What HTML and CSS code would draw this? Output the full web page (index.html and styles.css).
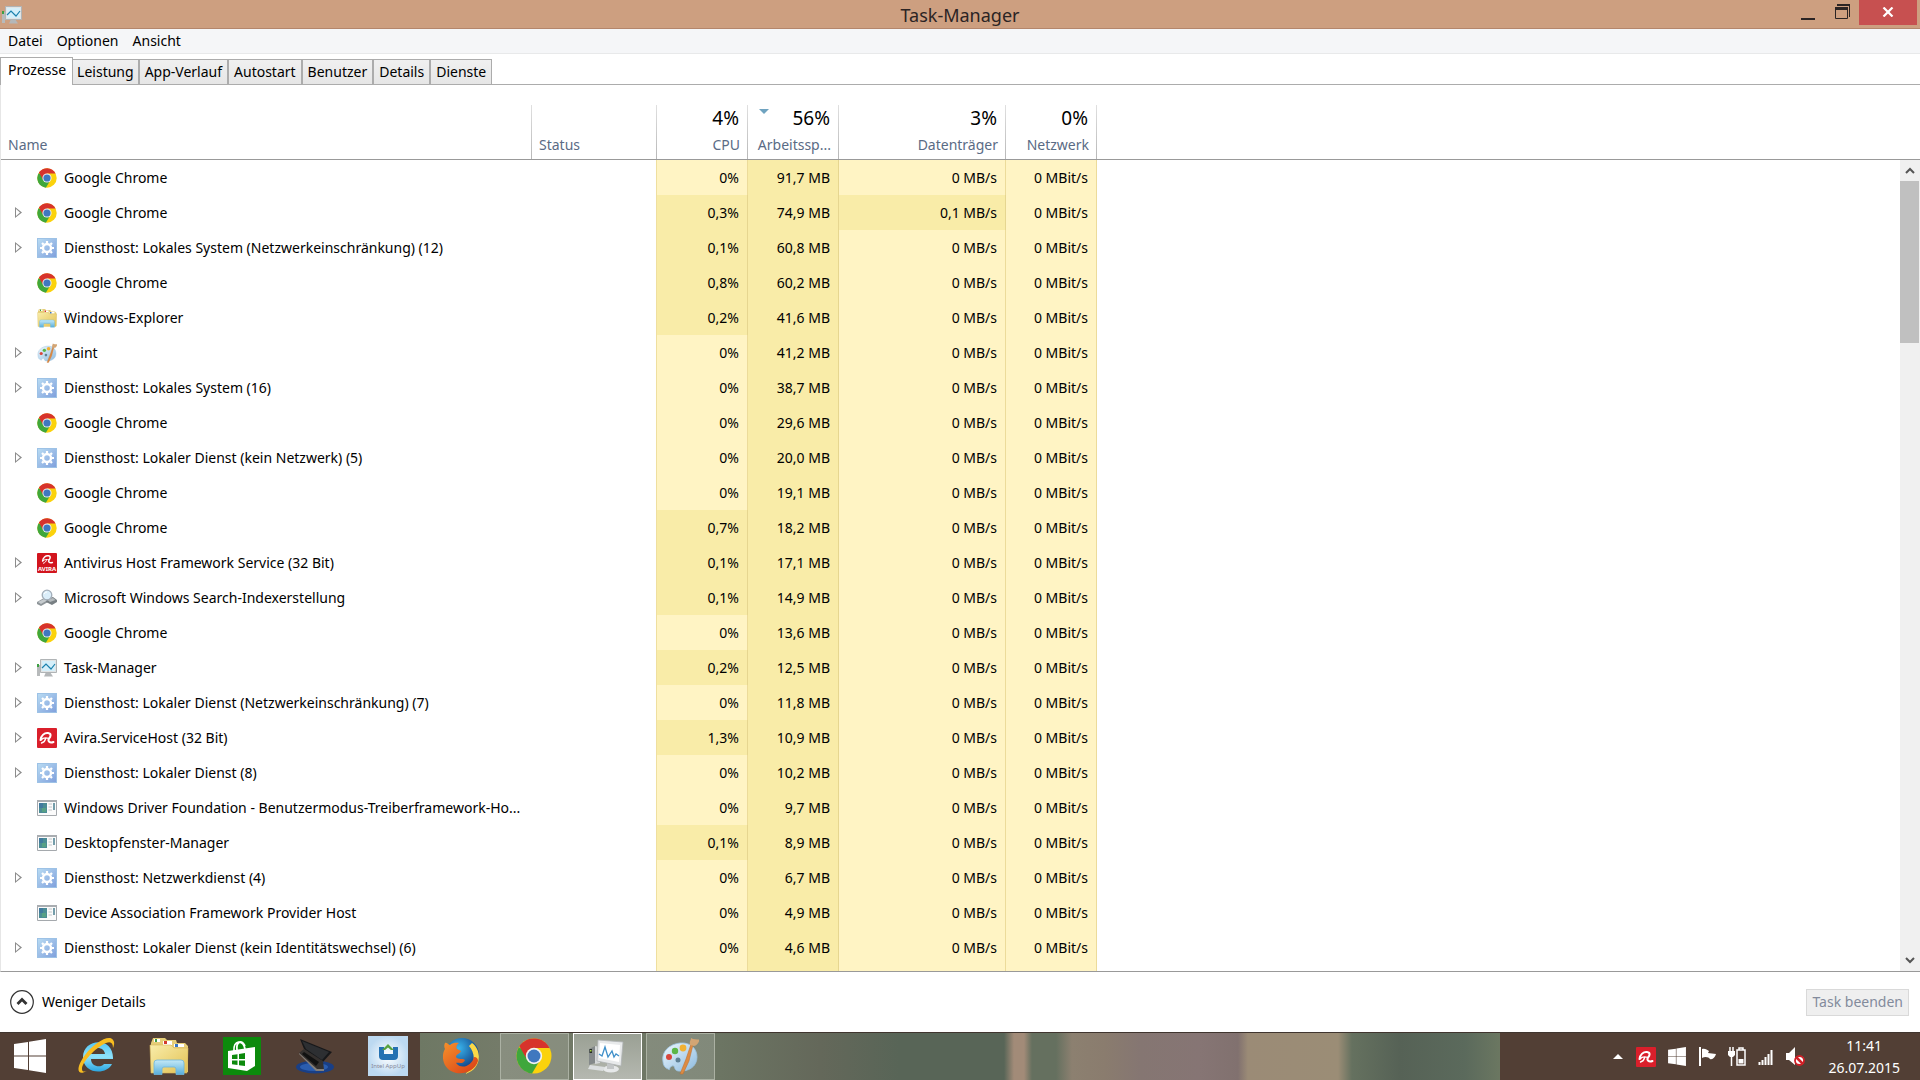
FILE: index.html
```html
<!DOCTYPE html>
<html lang="de">
<head>
<meta charset="utf-8" />
<title>Task-Manager</title>
<link rel="stylesheet" href="styles.css">
</head>
<body>
  <!-- Symbole -->
  <svg class="sprite" aria-hidden="true">
    <defs>
      <linearGradient id="gBlue" x1="0" y1="0" x2="1" y2="1"><stop offset="0" stop-color="#b9dcf3"/><stop offset="1" stop-color="#7f9fdc"/></linearGradient>
      <linearGradient id="gFolder" x1="0" y1="0" x2="1" y2="1"><stop offset="0" stop-color="#f9edaa"/><stop offset="1" stop-color="#e2c153"/></linearGradient>
      <linearGradient id="gStand" x1="0" y1="0" x2="0" y2="1"><stop offset="0" stop-color="#c4e9f7"/><stop offset="1" stop-color="#58aedb"/></linearGradient>
      <linearGradient id="gIe" x1="0" y1="0" x2="0" y2="1"><stop offset="0" stop-color="#54c6f4"/><stop offset=".5" stop-color="#8fe2fb"/><stop offset="1" stop-color="#2ba6e0"/></linearGradient>
      <linearGradient id="gPal" x1="0" y1="0" x2="1" y2="1"><stop offset="0" stop-color="#eef8fe"/><stop offset="1" stop-color="#8dbbe0"/></linearGradient>
      <linearGradient id="gFox" x1="0" y1="0" x2="1" y2="1"><stop offset="0" stop-color="#f5912b"/><stop offset="1" stop-color="#d83c16"/></linearGradient>
      <radialGradient id="gGlobe" cx=".4" cy=".3" r=".7"><stop offset="0" stop-color="#39b4ec"/><stop offset="1" stop-color="#0d3379"/></radialGradient>
      <radialGradient id="gUp"><stop offset="0" stop-color="#ffffff"/><stop offset="1" stop-color="#bcd9f1"/></radialGradient>
    </defs>
    <symbol id="chrome" viewBox="0 0 36 36">
      <circle cx="18" cy="18" r="17.500" fill="#fbd20c"/>
      <path d="M18 18 2.800 9.300A17.500 17.500 0 0 0 16 35.400L24 22Z" fill="#3fa73c"/>
      <path d="M18 10H33.500A17.500 17.500 0 0 0 3.400 8.200L11 21.500 18 18Z" fill="#d7332c"/>
      <circle cx="18" cy="18" r="8.200" fill="#f3f3f3"/>
      <circle cx="18" cy="18" r="6.500" fill="#3f78bf"/>
    </symbol>
    <symbol id="gear" viewBox="0 0 20 20">
      <rect x=".5" y=".5" width="19" height="19" fill="url(#gBlue)" stroke="#9dc2e6"/>
      <circle cx="10" cy="10" r="4" fill="none" stroke="#fff" stroke-width="2.400"/>
      <path d="M10 3V5M10 15V17M3 10H5M15 10H17M5 5 6.400 6.400M13.600 13.600 15 15M15 5 13.600 6.400M6.400 13.600 5 15" stroke="#fff" stroke-width="2.200"/>
    </symbol>
    <symbol id="explorer" viewBox="0 0 40 38">
      <path d="M2 6 4 1H16L18 3H27L28 6H36L39 9V35H2Z" fill="#e6ce78"/>
      <path d="M5 2H11V5H5ZM14 4H23V8H14ZM25 7H35V10H25Z" fill="#fff"/>
      <path d="M6 2H8V5H6Z" fill="#3b9a49"/><path d="M15 4H18V7H15Z" fill="#d43b2e"/><path d="M26 7H29V10H26Z" fill="#3a77c3"/>
      <path d="M1 8H22L25 11H39L38 36H2Z" fill="url(#gFolder)" stroke="#d7b75a" stroke-width=".6"/>
      <path d="M5 37.500V26Q5 23 8 23H32Q35 23 35 26V37.500H27V32Q27 30 25 30H15Q13 30 13 32V37.500Z" fill="url(#gStand)" stroke="#6db5dc" stroke-width=".8"/>
    </symbol>
    <symbol id="paint" viewBox="0 0 38 38">
      <path d="M2 25C0 14 9 7 19 6 30 5 36 12 36 20 36 30 27 35 17 34 12 33 15 28 11 29 7 31 10 34 7 32 4 31 2 28 2 25Z" fill="url(#gPal)" stroke="#9cc3df" stroke-width=".8"/>
      <circle cx="8" cy="20" r="3" fill="#d8463c"/><circle cx="14" cy="14" r="3.200" fill="#5cb648"/><circle cx="22" cy="11" r="3.400" fill="#f1b133"/><circle cx="17" cy="23" r="2.500" fill="#5f8095"/>
      <path d="M32 8 28 24 22 37 19 37 25 22 30 7Z" fill="#dd8b43" stroke="#b96d2e" stroke-width=".5"/>
      <path d="M29 8C28 4 30 4 30 1 33 3 38 2 39 3 37 6 36 9 33 9Z" fill="#d3a574"/>
    </symbol>
    <symbol id="taskmgr" viewBox="0 0 20 18">
      <path d="M0 6H3V17H0Z" fill="#b7babb"/><path d="M0 5H2V8H0Z" fill="#3da043"/>
      <path d="M9 13H13L16 17.500H7Z" fill="#b4b7b9"/>
      <path d="M3.500.5H19.500V13.500H3.500Z" fill="#e1e4e5" stroke="#b0b4b6"/>
      <path d="M5 2H18V12H5Z" fill="#d5effa"/>
      <path d="M5 9 9 5 14 10 18 5" fill="none" stroke="#1b81ad" stroke-width="1.200"/>
    </symbol>
    <symbol id="taskmgrBig" viewBox="0 0 38 34">
      <path d="M1 10 7 7V24L1 26Z" fill="#84898a"/><path d="M7 7 12 8V24L7 25Z" fill="#d5d8d9"/><path d="M1.500 10H4V14H1.500Z" fill="#252c25"/><path d="M2 11H3.500V12.500H2Z" fill="#a4d43b"/>
      <ellipse cx="23" cy="30" rx="8" ry="3.500" fill="#e6e8e9"/><path d="M19 24H26V30H19Z" fill="#c3c6c7"/>
      <path d="M2 26 17 28 15 32 0 30Z" fill="#dcdfe0"/>
      <path d="M10 1 35 3 33 27 9 22Z" fill="#e8eaeb" stroke="#aeb2b4" stroke-width=".8"/>
      <path d="M12 4 32 6 31 23 11 19Z" fill="#fff"/>
      <path d="M11 15 14 17 17 8 20 18 24 12 26 18 28 15 31 17" fill="none" stroke="#3e8fc9" stroke-width="1.300"/>
    </symbol>
    <symbol id="umbrella" viewBox="0 0 20 20">
      <path d="M3.500 12C4 7.500 7.500 4.500 11 5 15 5.500 13.500 9 12 10.500 10.500 13 12.500 15.500 16.500 14" fill="none" stroke="#fff" stroke-width="2" stroke-linecap="round"/>
      <path d="M4 12C6 9.500 8.500 9.500 12 10.500M8.500 11C8 13 6.500 14.500 4.500 15" fill="none" stroke="#fff" stroke-width="1.300" stroke-linecap="round"/>
    </symbol>
    <symbol id="avira" viewBox="0 0 20 20">
      <rect width="20" height="20" rx="1" fill="#da1f2b"/>
      <use href="#umbrella" width="20" height="20"/>
    </symbol>
    <symbol id="indexer" viewBox="0 0 20 18">
      <path d="M0 13 7 9 11 11V13L4 17 0 15Z" fill="#8e9599"/><path d="M9 10 16 8 20 11V13L15 16 9 13Z" fill="#787f83"/>
      <path d="M1 13 7 10 10 11.500 4 15Z" fill="#c6cbce"/><path d="M10 10.500 16 9 18.500 11 13 13Z" fill="#b4babd"/>
      <circle cx="10" cy="6" r="4.800" fill="#dbeefa" stroke="#a2adb8" stroke-width="1.300"/>
      <path d="M7 5Q8 3 10 3" stroke="#fff" fill="none"/>
    </symbol>
    <symbol id="window" viewBox="0 0 20 16">
      <path d="M.5.5H19.500V15.500H.5Z" fill="#fbfbfb" stroke="#a5a9ad"/><path d="M0 0H20V2H0Z" fill="#a9adb1"/>
      <path d="M2 3H10V13H2Z" fill="#4b8c95"/><path d="M2 3H6V8H2Z" fill="#417a9e"/><path d="M5 8H9V12H5Z" fill="#57a085"/>
      <path d="M11.500 4H15M11.500 7H15M11.500 10H15" stroke="#c1c5c8"/><path d="M17 3V10" stroke="#477e8f" stroke-width="1.500"/>
    </symbol>
    <symbol id="winlogo" viewBox="0 0 32 34">
      <path d="M0 5 14 3V16.500H0ZM15 2.800 32 0V16.500H15ZM0 17.500H14V31L0 29ZM15 17.500H32V34L15 31.200Z" fill="#fff"/>
    </symbol>
  </svg>

  <div class="window">
    <header class="titlebar">
      <svg class="app-icon"><use href="#taskmgr"/></svg>
      <h1>Task-Manager</h1>
      <div class="caption">
        <button type="button" aria-label="Minimieren"><svg width="14" height="16"><path d="M0 14H14V16H0Z" fill="#2b2424"/></svg></button>
        <button type="button" aria-label="Verkleinern"><svg width="15" height="15"><path d="M2 0H15V13H14V2H2Z" fill="#2b2424"/><path d="M.5 4.500H12.500V14.500H.5Z" fill="none" stroke="#2b2424"/><path d="M0 3H13V6H0Z" fill="#2b2424"/></svg></button>
        <button type="button" class="close" aria-label="Schließen"><svg width="12" height="10"><path d="M1.500.5 10.500 9.500M10.500.5 1.500 9.500" stroke="#fff" stroke-width="2.200"/></svg></button>
      </div>
    </header>

    <nav class="menu">
      <button type="button">Datei</button>
      <button type="button">Optionen</button>
      <button type="button">Ansicht</button>
    </nav>

    <div class="tabs" role="tablist">
      <button type="button" role="tab" class="active" aria-selected="true">Prozesse</button>
      <button type="button" role="tab">Leistung</button>
      <button type="button" role="tab">App-Verlauf</button>
      <button type="button" role="tab">Autostart</button>
      <button type="button" role="tab">Benutzer</button>
      <button type="button" role="tab">Details</button>
      <button type="button" role="tab">Dienste</button>
    </div>

    <main class="list">
      <div class="table-wrap">
        <table>
          <colgroup>
            <col class="c-name"><col class="c-status"><col class="c-cpu"><col class="c-mem"><col class="c-disk"><col class="c-net"><col>
          </colgroup>
          <thead>
            <tr>
              <th class="left">Name</th>
              <th class="left">Status</th>
              <th><b>4%</b>CPU</th>
              <th class="sorted"><b>56%</b>Arbeitssp...</th>
              <th><b>3%</b>Datenträger</th>
              <th><b>0%</b>Netzwerk</th>
              <td></td>
            </tr>
          </thead>
          <tbody>
            <tr><td><div class="proc"><svg><use href="#chrome"/></svg><span>Google Chrome</span></div></td><td></td><td>0%</td><td>91,7 MB</td><td>0 MB/s</td><td>0 MBit/s</td><td></td></tr>
            <tr class="group"><td><div class="proc"><svg><use href="#chrome"/></svg><span>Google Chrome</span></div></td><td></td><td class="hot">0,3%</td><td>74,9 MB</td><td class="hot">0,1 MB/s</td><td>0 MBit/s</td><td></td></tr>
            <tr class="group"><td><div class="proc"><svg><use href="#gear"/></svg><span>Diensthost: Lokales System (Netzwerkeinschränkung) (12)</span></div></td><td></td><td class="hot">0,1%</td><td>60,8 MB</td><td>0 MB/s</td><td>0 MBit/s</td><td></td></tr>
            <tr><td><div class="proc"><svg><use href="#chrome"/></svg><span>Google Chrome</span></div></td><td></td><td class="hot">0,8%</td><td>60,2 MB</td><td>0 MB/s</td><td>0 MBit/s</td><td></td></tr>
            <tr><td><div class="proc"><svg><use href="#explorer"/></svg><span>Windows-Explorer</span></div></td><td></td><td class="hot">0,2%</td><td>41,6 MB</td><td>0 MB/s</td><td>0 MBit/s</td><td></td></tr>
            <tr class="group"><td><div class="proc"><svg><use href="#paint"/></svg><span>Paint</span></div></td><td></td><td>0%</td><td>41,2 MB</td><td>0 MB/s</td><td>0 MBit/s</td><td></td></tr>
            <tr class="group"><td><div class="proc"><svg><use href="#gear"/></svg><span>Diensthost: Lokales System (16)</span></div></td><td></td><td>0%</td><td>38,7 MB</td><td>0 MB/s</td><td>0 MBit/s</td><td></td></tr>
            <tr><td><div class="proc"><svg><use href="#chrome"/></svg><span>Google Chrome</span></div></td><td></td><td>0%</td><td>29,6 MB</td><td>0 MB/s</td><td>0 MBit/s</td><td></td></tr>
            <tr class="group"><td><div class="proc"><svg><use href="#gear"/></svg><span>Diensthost: Lokaler Dienst (kein Netzwerk) (5)</span></div></td><td></td><td>0%</td><td>20,0 MB</td><td>0 MB/s</td><td>0 MBit/s</td><td></td></tr>
            <tr><td><div class="proc"><svg><use href="#chrome"/></svg><span>Google Chrome</span></div></td><td></td><td>0%</td><td>19,1 MB</td><td>0 MB/s</td><td>0 MBit/s</td><td></td></tr>
            <tr><td><div class="proc"><svg><use href="#chrome"/></svg><span>Google Chrome</span></div></td><td></td><td class="hot">0,7%</td><td>18,2 MB</td><td>0 MB/s</td><td>0 MBit/s</td><td></td></tr>
            <tr class="group"><td><div class="proc"><svg viewBox="0 0 20 20"><rect width="20" height="20" rx="1" fill="#d2151e"/><use href="#umbrella" x="3" y="-1" width="15" height="15"/><text x="10" y="18" class="avira-name">AVIRA</text></svg><span>Antivirus Host Framework Service (32 Bit)</span></div></td><td></td><td class="hot">0,1%</td><td>17,1 MB</td><td>0 MB/s</td><td>0 MBit/s</td><td></td></tr>
            <tr class="group"><td><div class="proc"><svg><use href="#indexer"/></svg><span>Microsoft Windows Search-Indexerstellung</span></div></td><td></td><td class="hot">0,1%</td><td>14,9 MB</td><td>0 MB/s</td><td>0 MBit/s</td><td></td></tr>
            <tr><td><div class="proc"><svg><use href="#chrome"/></svg><span>Google Chrome</span></div></td><td></td><td>0%</td><td>13,6 MB</td><td>0 MB/s</td><td>0 MBit/s</td><td></td></tr>
            <tr class="group"><td><div class="proc"><svg><use href="#taskmgr"/></svg><span>Task-Manager</span></div></td><td></td><td class="hot">0,2%</td><td>12,5 MB</td><td>0 MB/s</td><td>0 MBit/s</td><td></td></tr>
            <tr class="group"><td><div class="proc"><svg><use href="#gear"/></svg><span>Diensthost: Lokaler Dienst (Netzwerkeinschränkung) (7)</span></div></td><td></td><td>0%</td><td>11,8 MB</td><td>0 MB/s</td><td>0 MBit/s</td><td></td></tr>
            <tr class="group"><td><div class="proc"><svg><use href="#avira"/></svg><span>Avira.ServiceHost (32 Bit)</span></div></td><td></td><td class="hot">1,3%</td><td>10,9 MB</td><td>0 MB/s</td><td>0 MBit/s</td><td></td></tr>
            <tr class="group"><td><div class="proc"><svg><use href="#gear"/></svg><span>Diensthost: Lokaler Dienst (8)</span></div></td><td></td><td>0%</td><td>10,2 MB</td><td>0 MB/s</td><td>0 MBit/s</td><td></td></tr>
            <tr><td><div class="proc"><svg><use href="#window"/></svg><span>Windows Driver Foundation - Benutzermodus-Treiberframework-Ho...</span></div></td><td></td><td>0%</td><td>9,7 MB</td><td>0 MB/s</td><td>0 MBit/s</td><td></td></tr>
            <tr><td><div class="proc"><svg><use href="#window"/></svg><span>Desktopfenster-Manager</span></div></td><td></td><td class="hot">0,1%</td><td>8,9 MB</td><td>0 MB/s</td><td>0 MBit/s</td><td></td></tr>
            <tr class="group"><td><div class="proc"><svg><use href="#gear"/></svg><span>Diensthost: Netzwerkdienst (4)</span></div></td><td></td><td>0%</td><td>6,7 MB</td><td>0 MB/s</td><td>0 MBit/s</td><td></td></tr>
            <tr><td><div class="proc"><svg><use href="#window"/></svg><span>Device Association Framework Provider Host</span></div></td><td></td><td>0%</td><td>4,9 MB</td><td>0 MB/s</td><td>0 MBit/s</td><td></td></tr>
            <tr class="group"><td><div class="proc"><svg><use href="#gear"/></svg><span>Diensthost: Lokaler Dienst (kein Identitätswechsel) (6)</span></div></td><td></td><td>0%</td><td>4,6 MB</td><td>0 MB/s</td><td>0 MBit/s</td><td></td></tr>
            <tr><td></td><td></td><td></td><td></td><td></td><td></td><td></td></tr>
          </tbody>
        </table>
      </div>
      <div class="side">
        <div class="side-head"></div>
        <div class="scrollbar">
          <button type="button" aria-label="Nach oben"><svg width="10" height="7"><path d="M1 6 5 2 9 6" fill="none" stroke="#555" stroke-width="2"/></svg></button>
          <div class="thumb"></div>
          <button type="button" class="down" aria-label="Nach unten"><svg width="10" height="7"><path d="M1 1 5 5 9 1" fill="none" stroke="#555" stroke-width="2"/></svg></button>
        </div>
      </div>
    </main>

    <footer class="actions">
      <button type="button" class="fewer">
        <svg width="24" height="24"><circle cx="12" cy="12" r="11.300" fill="#fff" stroke="#333" stroke-width="1.200"/><path d="M7.500 14 12 9.500 16.500 14" fill="none" stroke="#333" stroke-width="2.800"/></svg>
        Weniger Details
      </button>
      <button type="button" class="end" disabled>Task beenden</button>
    </footer>
  </div>

  <div class="taskbar">
    <div class="pinned">
      <button type="button" class="start" aria-label="Start"><svg width="32" height="34"><use href="#winlogo"/></svg></button>
      <button type="button" aria-label="Internet Explorer">
        <svg width="38" height="38" viewBox="0 0 38 38">
          <path d="M36 22H14C14 30 24 31 27 27H35C30 38 6 38 6 20 6 1 37 -1 36 22ZM14 17H28C27 9 15 9 14 17Z" fill="url(#gIe)" fill-rule="evenodd"/>
          <path d="M10 34C-1 40 -1 30 8 18 17 6 32 -3 36 3 38 5 37 9 36 11 36 6 34 4 29 6 18 11 5 25 5 32 5 35 7 35 10 34Z" fill="#f8bd20"/>
        </svg>
      </button>
      <button type="button" aria-label="Explorer"><svg width="40" height="38"><use href="#explorer"/></svg></button>
      <button type="button" aria-label="Store">
        <svg width="38" height="38" viewBox="0 0 38 38">
          <rect width="38" height="38" fill="#0c8a0c"/>
          <path d="M5 14 32 10V29L24 34 5 31Z" fill="#fff"/>
          <path d="M11 14C10 3 20 2 22 12M14 13C13 5 18 2 22 9" fill="none" stroke="#fff" stroke-width="1.800"/>
          <path d="M9 18 14.500 17.300V22H9ZM16 17 22 16V22H16ZM9 23.500H14.500V28L9 27.300ZM16 23.500H22V29L16 28.200Z" fill="#0c8a0c"/>
        </svg>
      </button>
      <button type="button" aria-label="Notebook">
        <svg width="38" height="38" viewBox="0 0 38 38">
          <ellipse cx="19" cy="30" rx="19" ry="6.500" fill="#193f86"/><ellipse cx="18" cy="30" rx="14" ry="4" fill="#2b5dae"/>
          <path d="M4 2 36 15 26 26 8 12Z" fill="#17181a"/><path d="M6 4 33 15 26 23 10 12Z" fill="#2d2f32"/>
          <path d="M8 12 27 24 28 33 21 34 3 16Z" fill="#34302e"/><path d="M8 15 23 25 20 29 6 17Z" fill="#111"/><path d="M3 16 21 32 28 32 28 34 20 34 3 17Z" fill="#847e78"/>
        </svg>
      </button>
      <button type="button" aria-label="Intel AppUp">
        <svg width="40" height="40" viewBox="0 0 40 40">
          <rect width="40" height="40" fill="url(#gUp)"/>
          <path d="M11 11H16V18H25V11H30V20Q30 24 26 24H15Q11 24 11 20Z" fill="#2471b2"/><path d="M14 14 20 8 26 14H23L20 11.500 17 14Z" fill="#57a23e"/>
          <text x="20" y="32" class="appup">Intel AppUp</text>
        </svg>
      </button>
      <button type="button" aria-label="Firefox">
        <svg width="38" height="38" viewBox="0 0 38 38">
          <circle cx="20" cy="18" r="17" fill="url(#gGlobe)"/>
          <path d="M30 6C41 14 39 33 23 37 35 29 33 15 27 9Z" fill="#fad846"/>
          <path d="M3 6C5 5 6 8 8 8 12 5 15 6 17 6 14 8 14 11 15 12L19 14C18 17 14 17 14 20 16 23 21 21 23 23 21 28 16 25 14 26 19 33 30 29 32 20 35 20 36 22 36 24 32 36 18 39 9 34 -1 28 0 16 3 12 2 10 2 8 3 6Z" fill="url(#gFox)"/>
        </svg>
      </button>
      <button type="button" class="running" aria-label="Google Chrome"><svg width="36" height="36"><use href="#chrome"/></svg></button>
      <button type="button" class="running current" aria-label="Task-Manager"><svg width="38" height="34"><use href="#taskmgrBig"/></svg></button>
      <button type="button" class="running" aria-label="Paint"><svg width="38" height="38"><use href="#paint"/></svg></button>
    </div>
    <div class="tray">
      <svg width="12" height="7"><path d="M1 6 6 1 11 6Z" fill="#fff"/></svg>
      <svg width="20" height="20"><use href="#avira"/></svg>
      <svg width="18" height="19"><use href="#winlogo"/></svg>
      <svg width="18" height="19"><path d="M1 0H3V19H1Z" fill="#fff"/><path d="M4 2C7 1 9 3 11 4L10 6 18 7C17 10 15 13 12 12 11 10 7 9 4 11Z" fill="#fff"/></svg>
      <svg width="18" height="19"><path d="M2 0V5M5 0V5M3.500 9V19" stroke="#fff" stroke-width="1.500"/><path d="M0 4H7V8L5 10H2L0 8Z" fill="#fff"/><path d="M9 3H17V18H9ZM11 1H15V3H11Z" fill="none" stroke="#fff" stroke-width="1.500"/><path d="M10.500 12H15.500V16.500H10.500Z" fill="#fff"/></svg>
      <svg width="16" height="17"><path d="M1.500 17V14M4.500 17V12M7.500 17V9M10.500 17V6M13.500 17V2" stroke="#fff" stroke-width="2"/></svg>
      <svg width="19" height="19"><path d="M0 6H3L9 0V18L3 13H0Z" fill="#fff"/><circle cx="13.500" cy="13.500" r="4.500" fill="#fff" stroke="#cf2027" stroke-width="1.800"/><path d="M10 10 17 17" stroke="#cf2027" stroke-width="2.500"/></svg>
      <div class="clock"><span>11:41</span><span>26.07.2015</span></div>
    </div>
  </div>
</body>
</html>
```

FILE: styles.css
```css
*{
  margin: 0;
  padding: 0;
  box-sizing: border-box;
}
body{
  height: 100vh;
  display: flex;
  flex-direction: column;
  overflow: hidden;
  font: 14px/20px "Noto Sans", "Open Sans", sans-serif;
  color: #000;
  background: #fff;
}
button{
  font: inherit;
  color: inherit;
  border: 0;
  background: none;
}
svg{
  display: block;
  flex: none;
}
.sprite{
  position: absolute;
  width: 0;
  height: 0;
}
.window{
  flex: 1;
  min-height: 0;
  display: flex;
  flex-direction: column;
}

/* Titelleiste */
.titlebar{
  display: grid;
  grid-template-columns: 1fr auto 1fr;
  height: 29px;
  background: #cd9f80;
  border-bottom: 1px solid #b4866c;
}
.app-icon{
  width: 20px;
  height: 18px;
  margin: 6px 2px;
}
.titlebar h1{
  font-size: 18px;
  font-weight: 400;
  line-height: 30px;
  color: #2b2424;
}
.caption{
  display: flex;
  justify-content: flex-end;
  align-items: flex-start;
  padding-right: 3px;
}
.caption button{
  width: 34px;
  height: 25px;
  padding-top: 4px;
  display: flex;
  justify-content: center;
}
.caption .close{
  width: 58px;
  padding-top: 7px;
  background: #c75050;
}

/* Menü */
.menu{
  display: flex;
  gap: 14px;
  height: 25px;
  padding: 2px 8px;
  background: #f5f6f8;
  border-bottom: 1px solid #e8e9ea;
}

/* Registerkarten */
.tabs{
  display: flex;
  align-items: flex-end;
  height: 31px;
  border-bottom: 1px solid #acacac;
}
.tabs button{
  height: 25px;
  padding: 0 5px;
  background: linear-gradient(#f0f0f0, #e6e6e6);
  border: 1px solid #acacac;
  border-bottom: 0;
}
.tabs .active{
  height: 28px;
  margin-bottom: -1px;
  padding: 0 6px 3px 7px;
  background: #fff;
}
.tabs .active + button{
  padding: 0 4px;
  border-left: 0;
}

/* Prozessliste */
.list{
  flex: 1;
  min-height: 0;
  display: flex;
  overflow: hidden;
  border-left: 1px solid #e6e6e6;
  border-bottom: 1px solid #999;
}
.table-wrap{
  flex: 1;
  overflow: hidden;
}
table{
  width: 100%;
  table-layout: fixed;
  border-collapse: separate;
  border-spacing: 0;
}
.c-name{ width: 531px; }
.c-status{ width: 125px; }
.c-cpu, .c-mem, .c-net{ width: 91px; }
.c-disk{ width: 167px; }

thead th, thead td{
  height: 75px;
  border-bottom: 1px solid #999;
}
th{
  padding: 0 8px 4px;
  font-weight: 400;
  text-align: right;
  vertical-align: bottom;
  color: #5a6b85;
  background: linear-gradient(#e0e0e0, #b8b8b8) right bottom / 1px 54px no-repeat;
}
th.left{
  padding-left: 7px;
  text-align: left;
}
th b{
  display: block;
  padding: 0 1px 5px 0;
  font-size: 19px;
  line-height: 24px;
  font-weight: 400;
  color: #000;
}
.sorted{
  position: relative;
}
.sorted::before{
  content: "";
  position: absolute;
  top: 24px;
  left: 11px;
  border: 5px solid transparent;
  border-top-color: #6fa3c0;
  border-bottom: 0;
}
tbody td{
  height: 35px;
  padding: 0 8px;
  text-align: right;
  white-space: nowrap;
}
tbody td:nth-child(1){
  padding: 0 0 0 36px;
}
tbody td:nth-child(2){
  border-right: 1px solid #efdf9f;
}
tbody td:nth-child(3), tbody td:nth-child(5), tbody td:nth-child(6){
  background: #fff4c4;
  border-right: 1px solid #ecdb9a;
}
tbody td:nth-child(4), tbody td.hot{
  background: #f9eca8;
  border-right: 1px solid #e6d690;
}
.proc{
  display: flex;
  align-items: center;
  gap: 7px;
}
.proc svg{
  width: 20px;
  height: 20px;
}
/* Aufklapp-Dreieck */
.group td:first-child{
  padding-left: 14px;
}
.group .proc::before{
  content: "";
  width: 7px;
  height: 11px;
  margin-right: 8px;
  background: #8c8c8c;
  clip-path: polygon(0 0, 100% 50%, 0 100%, 0 0, 1px 2px, 1px 9px, 5px 50%, 1px 2px);
}
.avira-name{
  font: bold 6px "Noto Sans", sans-serif;
  fill: #fff;
  text-anchor: middle;
}

/* Bildlaufleiste */
.side{
  width: 20px;
  display: flex;
  flex-direction: column;
}
.side-head{
  height: 75px;
  border-bottom: 1px solid #999;
}
.scrollbar{
  flex: 1;
  display: flex;
  flex-direction: column;
  background: #f0f0f0;
}
.scrollbar button{
  height: 21px;
  padding-left: 5px;
}
.scrollbar .thumb{
  height: 162px;
  margin-right: 1px;
  background: #c0c0c0;
}
.scrollbar .down{
  margin-top: auto;
}

/* Fußzeile */
.actions{
  display: flex;
  justify-content: space-between;
  align-items: center;
  height: 60px;
  padding: 0 11px 0 10px;
}
.fewer{
  display: flex;
  align-items: center;
  gap: 8px;
}
.end{
  height: 27px;
  padding: 0 5px;
  color: #838b9c;
  background: #efefef;
  border: 1px solid #d9d9d9;
}

/* Taskleiste */
.taskbar{
  display: flex;
  justify-content: space-between;
  height: 48px;
  border-top: 1px solid #40352f;
  background: linear-gradient(90deg, #523f35 420px, #6e7864 420px, #747b69 500px, #6c7563 720px, #64685a 820px, #586557 900px, #586557 1004px, #a28b78 1014px, #a28b78 1024px, #65705f 1032px, #65705f 1056px, #8c8070 1072px, #8a7c6e 1105px, #857672 1140px, #867574 1200px, #81716f 1238px, #9b8b76 1248px, #9b8d76 1338px, #65715f 1352px, #566256 1400px, #5b6a5c 1465px, #6b7761 1500px, #523f35 1500px);
}
.pinned{
  display: flex;
  gap: 4px;
}
.pinned button{
  width: 69px;
  padding: 0 2px 1px 0;
  display: flex;
  justify-content: center;
  align-items: center;
}
.pinned .start{
  width: 58px;
  padding: 0 0 1px 2px;
}
.pinned .running{
  border: 1px solid #abb1a3;
  background: rgba(255, 255, 255, .15);
}
.pinned .current{
  border-color: #fff;
  background: linear-gradient(#9aa094, #b5b8b0);
}
.appup{
  font: 6px "Noto Sans", sans-serif;
  fill: #889;
  text-anchor: middle;
}
.tray{
  display: flex;
  align-items: center;
  gap: 12px;
  padding-right: 20px;
  color: #fff;
}
.clock{
  display: flex;
  flex-direction: column;
  align-items: center;
  margin-left: 11px;
  line-height: 22px;
}
```
